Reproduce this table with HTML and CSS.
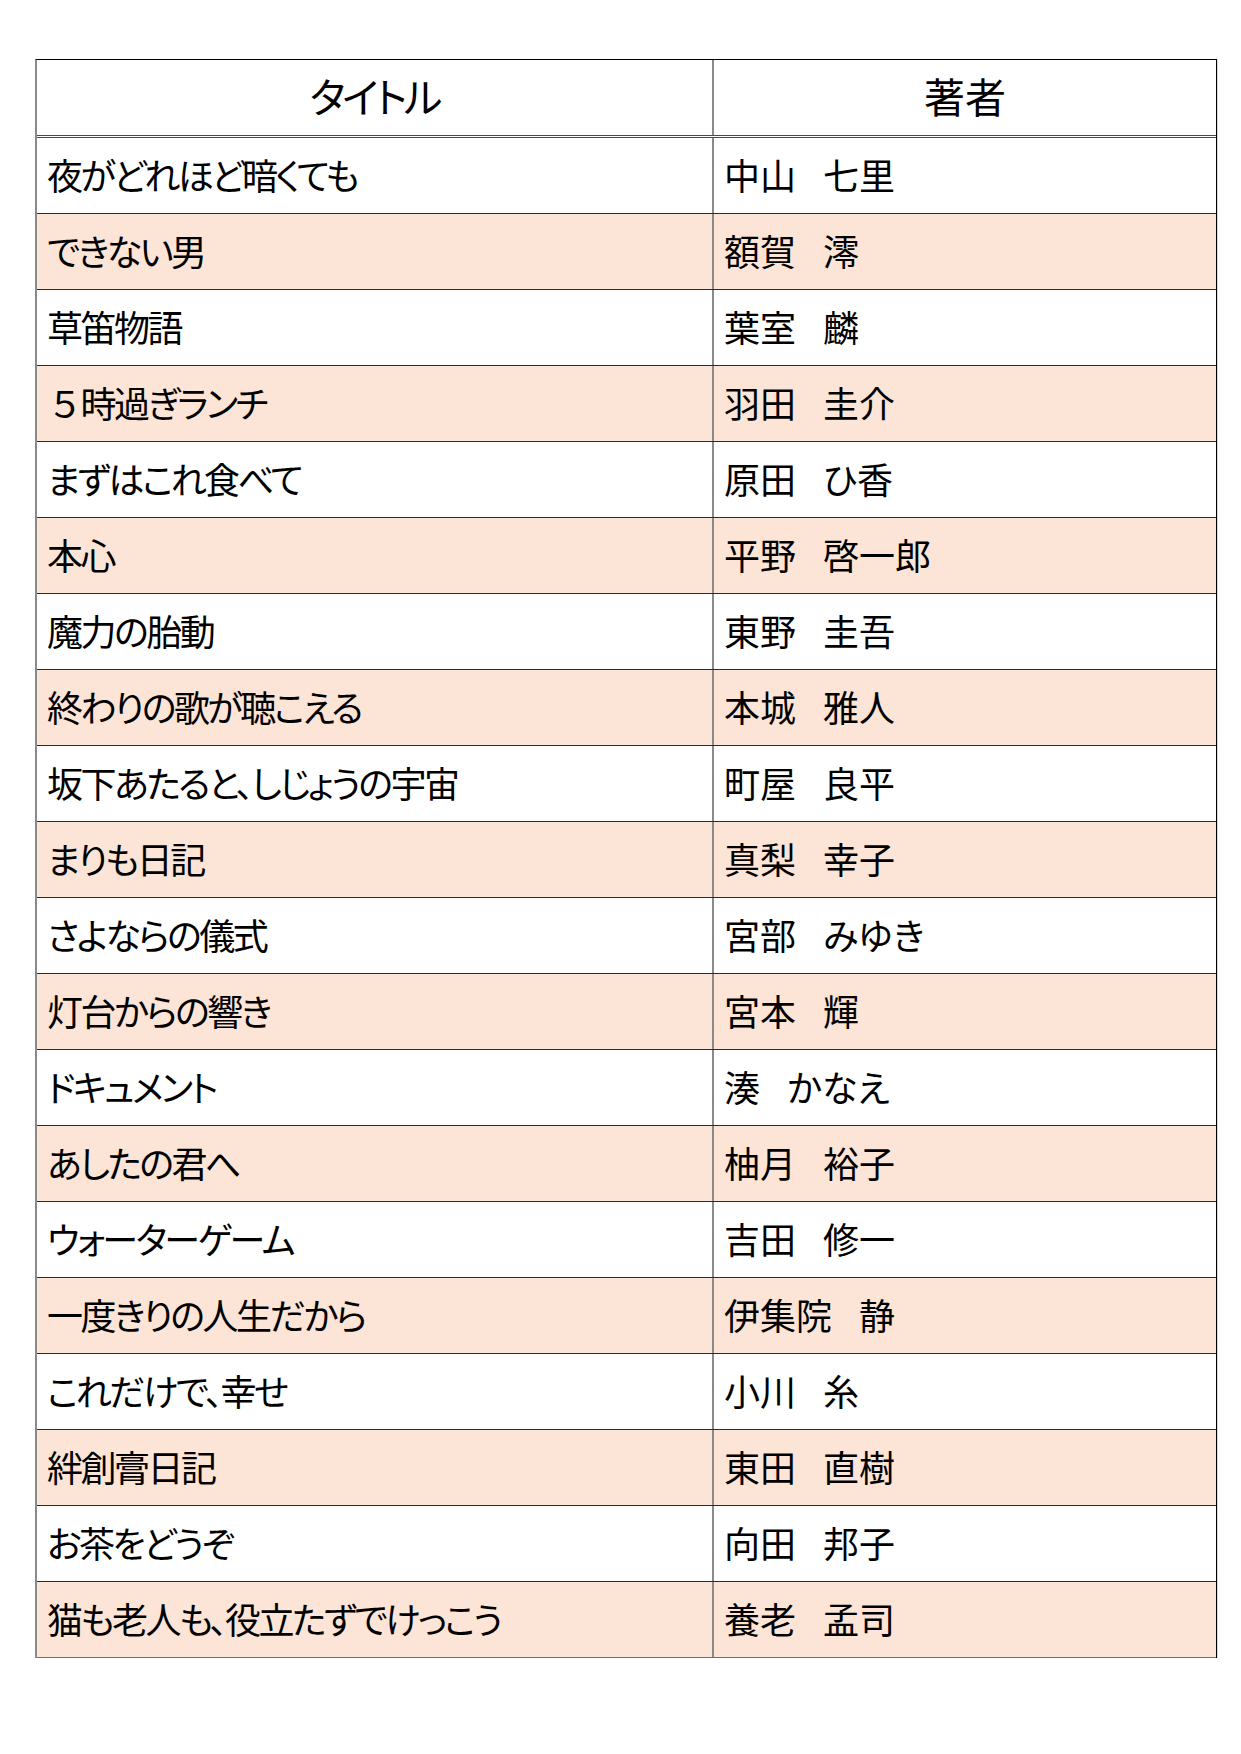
FILE: index.html
```html
<!DOCTYPE html>
<html lang="ja">
<head>
<meta charset="utf-8">
<title>書籍一覧</title>
<link rel="stylesheet" href="styles.css">
</head>
<body>
<div class="sheet">
  <div class="row head">
    <div class="cell c1">タイトル</div>
    <div class="cell c2">著者</div>
  </div>
  <div class="row"><div class="cell c1">夜がどれほど暗くても</div><div class="cell c2">中山<span class="sp">　</span>七里</div></div>
  <div class="row alt"><div class="cell c1">できない男</div><div class="cell c2">額賀<span class="sp">　</span>澪</div></div>
  <div class="row"><div class="cell c1">草笛物語</div><div class="cell c2">葉室<span class="sp">　</span>麟</div></div>
  <div class="row alt"><div class="cell c1"><span class="fw">５</span>時過ぎランチ</div><div class="cell c2">羽田<span class="sp">　</span>圭介</div></div>
  <div class="row"><div class="cell c1">まずはこれ食べて</div><div class="cell c2">原田<span class="sp">　</span>ひ香</div></div>
  <div class="row alt"><div class="cell c1">本心</div><div class="cell c2">平野<span class="sp">　</span>啓一郎</div></div>
  <div class="row"><div class="cell c1">魔力の胎動</div><div class="cell c2">東野<span class="sp">　</span>圭吾</div></div>
  <div class="row alt"><div class="cell c1">終わりの歌が聴こえる</div><div class="cell c2">本城<span class="sp">　</span>雅人</div></div>
  <div class="row"><div class="cell c1">坂下あたると、しじょうの宇宙</div><div class="cell c2">町屋<span class="sp">　</span>良平</div></div>
  <div class="row alt"><div class="cell c1">まりも日記</div><div class="cell c2">真梨<span class="sp">　</span>幸子</div></div>
  <div class="row"><div class="cell c1">さよならの儀式</div><div class="cell c2">宮部<span class="sp">　</span>みゆき</div></div>
  <div class="row alt"><div class="cell c1">灯台からの響き</div><div class="cell c2">宮本<span class="sp">　</span>輝</div></div>
  <div class="row"><div class="cell c1">ドキュメント</div><div class="cell c2">湊<span class="sp">　</span>かなえ</div></div>
  <div class="row alt"><div class="cell c1">あしたの君へ</div><div class="cell c2">柚月<span class="sp">　</span>裕子</div></div>
  <div class="row"><div class="cell c1">ウォーターゲーム</div><div class="cell c2">吉田<span class="sp">　</span>修一</div></div>
  <div class="row alt"><div class="cell c1">一度きりの人生だから</div><div class="cell c2">伊集院<span class="sp">　</span>静</div></div>
  <div class="row"><div class="cell c1">これだけで、幸せ</div><div class="cell c2">小川<span class="sp">　</span>糸</div></div>
  <div class="row alt"><div class="cell c1">絆創膏日記</div><div class="cell c2">東田<span class="sp">　</span>直樹</div></div>
  <div class="row"><div class="cell c1">お茶をどうぞ</div><div class="cell c2">向田<span class="sp">　</span>邦子</div></div>
  <div class="row alt"><div class="cell c1">猫も老人も、役立たずでけっこう</div><div class="cell c2">養老<span class="sp">　</span>孟司</div></div>
</div>
</body>
</html>
```

FILE: styles.css
```css
html, body {
  margin: 0;
  padding: 0;
  background: #ffffff;
}

body {
  font-family: "Noto Sans CJK JP", "Noto Sans", sans-serif;
  color: #000000;
}

.sheet {
  width: 1182px;
  margin: 59px 0 0 35px;
  box-sizing: border-box;
  border-left: 2px solid #8a8a8a;
  border-right: 1px solid #000000;
  border-top: 1px solid #000000;
  box-shadow: 1px 1px 0 #d9d9d9;
}

.row {
  display: grid;
  grid-template-columns: 677px 502px;
  height: 76px;
  border-bottom: 1px solid #2b2b2b;
  box-sizing: border-box;
}

.row.alt {
  background: #fce4d6;
}

.row:last-child {
  border-bottom-color: #6e6e6e;
}

.row.head {
  height: 78px;
  border-bottom: 3px double #4a4a4a;
}

.cell {
  display: flex;
  align-items: center;
  padding: 0 0 4px 10px;
  font-size: 36px;
  font-feature-settings: "palt" 1;
  line-height: 1;
  white-space: nowrap;
  box-sizing: border-box;
}

.c1 {
  border-right: 2px solid #8a8a8a;
  letter-spacing: -2.5px;
}

.c2 {
  letter-spacing: 0;
}

.sp {
  letter-spacing: -9px;
}

.fw {
  font-feature-settings: normal;
}

.head .cell {
  justify-content: center;
  padding: 0 0 4px 0;
  font-size: 41px;
}

.head .c1 {
  letter-spacing: -3px;
}
```
